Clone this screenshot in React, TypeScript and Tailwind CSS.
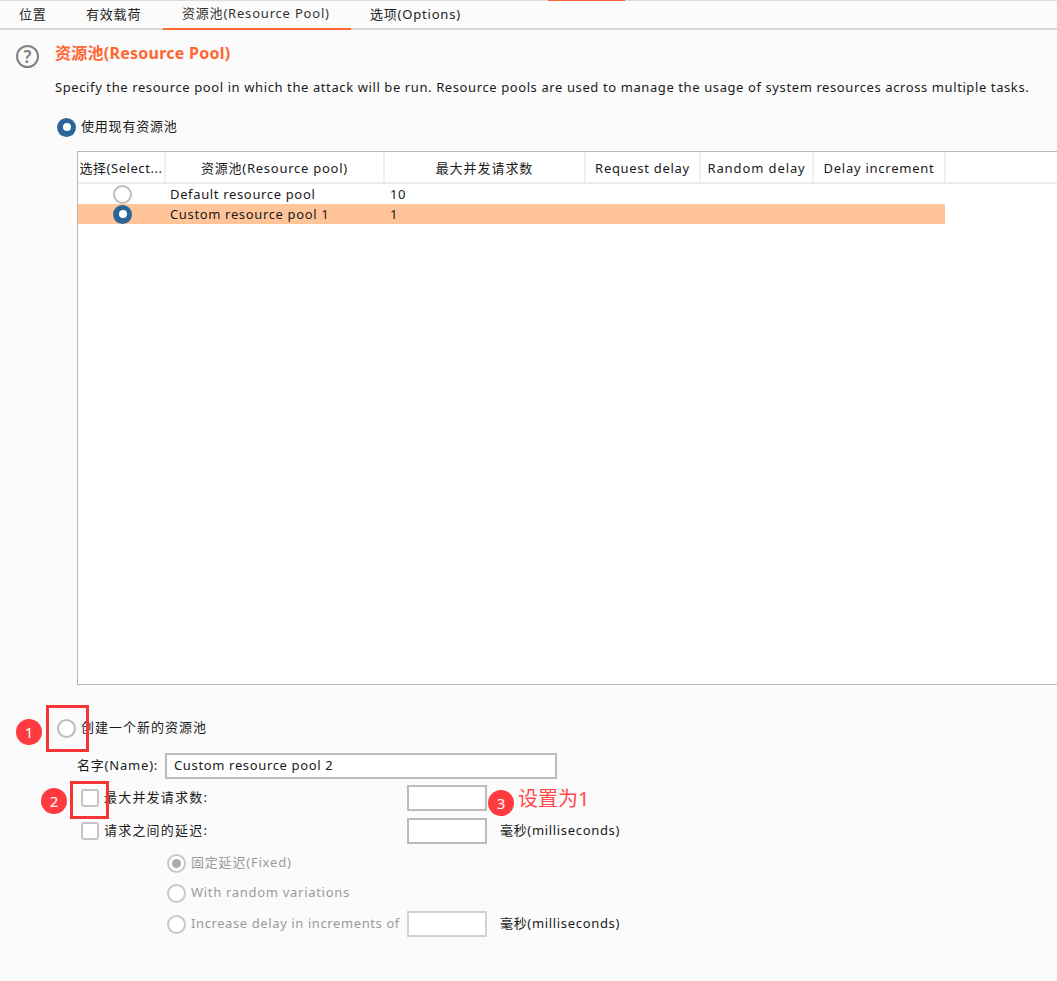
import React from 'react';

const fontStack = "font-['Noto_Sans','Noto_Sans_CJK_SC',sans-serif]";

function Radio({ checked, disabled }: { checked?: boolean; disabled?: boolean }) {
  if (checked && !disabled) {
    return (
      <span className="flex h-[19px] w-[19px] shrink-0 items-center justify-center rounded-full bg-[#2a6599]">
        <span className="h-[8px] w-[8px] rounded-full bg-white" />
      </span>
    );
  }
  return (
    <span
      className={`flex h-[19px] w-[19px] shrink-0 items-center justify-center rounded-full border-2 bg-white ${
        disabled ? 'border-[#c8c8c8]' : 'border-[#bdbdbd]'
      }`}
    >
      {checked && <span className="h-[9px] w-[9px] rounded-full bg-[#aaaaaa]" />}
    </span>
  );
}

function Checkbox() {
  return <span className="h-[18px] w-[18px] shrink-0 rounded-[3px] border-2 border-[#c4c4c4] bg-white" />;
}

function TextBox({ disabled, value, className }: { disabled?: boolean; value?: string; className?: string }) {
  return (
    <div
      className={`flex h-[26px] items-center border-2 bg-white px-[7px] text-[13px] tracking-[0.65px] text-[#1a1a1a] ${
        disabled ? 'border-[#d2d2d2]' : 'border-[#bfbaba]'
      } ${className ?? ''}`}
    >
      {value}
    </div>
  );
}

function Badge({ n, className }: { n: number; className: string }) {
  return (
    <span
      className={`absolute flex h-[26px] w-[26px] items-center justify-center rounded-full bg-[#ff3b3f] text-[15px] text-white ${className}`}
    >
      {n}
    </span>
  );
}

const columns = [
  { label: '选择(Select...', w: 'w-[88px]', track: 'tracking-[0.55px]' },
  { label: '资源池(Resource pool)', w: 'w-[219px]', track: 'tracking-[0.75px]' },
  { label: '最大并发请求数', w: 'w-[201px]', track: 'tracking-[0.95px]' },
  { label: 'Request delay', w: 'w-[115px]', track: 'tracking-[0.7px]' },
  { label: 'Random delay', w: 'w-[113px]', track: 'tracking-[0.9px]' },
  { label: 'Delay increment', w: 'w-[132px]', track: 'tracking-[0.75px]' },
];

const tabs = [
  { label: '位置', w: 'w-[66px]', pl: 'pl-[19px]' },
  { label: '有效载荷', w: 'w-[97px]', pl: 'pl-[20px]' },
  { label: '资源池(Resource Pool)', w: 'w-[188px]', pl: 'pl-[19px]', active: true },
  { label: '选项(Options)', w: 'w-[120px]', pl: 'pl-[19px]' },
];

export default function App() {
  return (
    <div className={`relative h-[981px] w-[1057px] overflow-hidden bg-[#fbfbfb] text-[13px] text-[#1a1a1a] ${fontStack}`}>
      {/* top strip of the parent tab bar */}
      <div className="h-[1px] bg-[#dcdcdc] pl-[548px]">
        <div className="h-[1px] w-[77px] bg-[#ff6633]" />
      </div>

      <div className="flex h-[29px] border-b-2 border-[#d6d6d6]">
        {tabs.map((t) => (
          <div
            key={t.label}
            className={`-mb-[2px] flex h-[29px] items-center pb-[2px] tracking-[0.8px] ${t.w} ${t.pl} ${
              t.active ? 'border-b-2 border-[#ff6633] text-[#333333]' : 'text-[#222222]'
            }`}
          >
            {t.label}
          </div>
        ))}
      </div>

      <div className="flex pl-[16px] pt-[13px]">
        <div className="mt-[2px] flex h-[23px] w-[23px] items-center justify-center rounded-full border-2 border-[#808080] text-[17px] font-semibold leading-none text-[#808080]">
          ?
        </div>
        <div className="ml-[16px]">
          <h1 className="h-[20px] text-[16px] font-bold leading-[20px] tracking-[0.25px] text-[#ff6633]">资源池(Resource Pool)</h1>
          <p className="mt-[14px] whitespace-nowrap text-[13px] leading-[20px] tracking-[0.6px]">
            Specify the resource pool in which the attack will be run. Resource pools are used to manage the usage of system resources across multiple tasks.
          </p>
        </div>
      </div>

      <div className="ml-[57px] mt-[20px] flex h-[20px] items-center gap-[5px] tracking-[0.8px]">
        <Radio checked />
        <span>使用现有资源池</span>
      </div>

      {/* resource pool table */}
      <div className="ml-[77px] mt-[14px] h-[534px] border-y border-l border-[#b9b6b6] bg-white">
        <div className="flex h-[32px] border-b-2 border-[#ececec]">
          {columns.map((c) => (
            <div
              key={c.label}
              className={`flex items-center justify-center whitespace-nowrap border-r-2 border-[#f0f0f0] pt-[4px] ${c.w} ${c.track}`}
            >
              {c.label}
            </div>
          ))}
        </div>
        <div className="flex h-[20px] items-center">
          <div className="flex w-[89px] justify-center">
            <Radio />
          </div>
          <div className="w-[218px] pl-[3px] pt-[2px] tracking-[0.65px]">Default resource pool</div>
          <div className="pl-[5px] pt-[2px] tracking-[0.65px]">10</div>
        </div>
        <div className="flex h-[20px] w-[867px] items-center bg-[#ffc599]">
          <div className="flex w-[89px] justify-center">
            <Radio checked />
          </div>
          <div className="w-[218px] pl-[3px] pt-[2px] tracking-[0.65px]">Custom resource pool 1</div>
          <div className="pl-[5px] pt-[2px] tracking-[0.65px]">1</div>
        </div>
      </div>

      {/* new pool form */}
      <div className="ml-[57px] mt-[33px] flex h-[20px] items-center gap-[5px] tracking-[1px]">
        <Radio />
        <span>创建一个新的资源池</span>
      </div>

      <div className="ml-[77px] mt-[15px] flex items-center gap-[6px] tracking-[0.8px]">
        <span className="w-[82px] whitespace-nowrap">名字(Name):</span>
        <TextBox value="Custom resource pool 2" className="w-[392px]" />
      </div>

      <div className="ml-[81px] mt-[6px] flex items-center">
        <Checkbox />
        <span className="ml-[5px] w-[303px] tracking-[1.2px]">最大并发请求数:</span>
        <TextBox className="w-[80px]" />
      </div>

      <div className="ml-[81px] mt-[7px] flex items-center">
        <Checkbox />
        <span className="ml-[5px] w-[303px] tracking-[1.2px]">请求之间的延迟:</span>
        <TextBox className="w-[80px]" />
        <span className="ml-[13px] tracking-[0.67px]">毫秒(milliseconds)</span>
      </div>

      <div className="ml-[167px] mt-[9px] flex h-[20px] items-center gap-[5px] tracking-[0.8px] text-[#9a9a9a]">
        <Radio checked disabled />
        <span>固定延迟(Fixed)</span>
      </div>
      <div className="ml-[167px] mt-[10px] flex h-[20px] items-center gap-[5px] tracking-[0.7px] text-[#9a9a9a]">
        <Radio disabled />
        <span>With random variations</span>
      </div>
      <div className="ml-[167px] mt-[8px] flex items-center tracking-[0.6px]">
        <Radio disabled />
        <span className="ml-[5px] w-[216px] whitespace-nowrap text-[#9a9a9a]">Increase delay in increments of</span>
        <TextBox disabled className="w-[80px]" />
        <span className="ml-[13px] tracking-[0.67px]">毫秒(milliseconds)</span>
      </div>

      {/* red annotations on top of the screenshot */}
      <div className="absolute left-[46px] top-[705px] h-[47px] w-[43px] border-[3px] border-[#f53438]" />
      <div className="absolute left-[70px] top-[781px] h-[38px] w-[39px] border-[3px] border-[#f53438]" />
      <Badge n={1} className="left-[16px] top-[719px]" />
      <Badge n={2} className="left-[41px] top-[788px]" />
      <Badge n={3} className="left-[488px] top-[790px]" />
      <span className="absolute left-[518px] top-[786px] text-[20px] leading-[26px] text-[#ff4a4d]">设置为1</span>
    </div>
  );
}
